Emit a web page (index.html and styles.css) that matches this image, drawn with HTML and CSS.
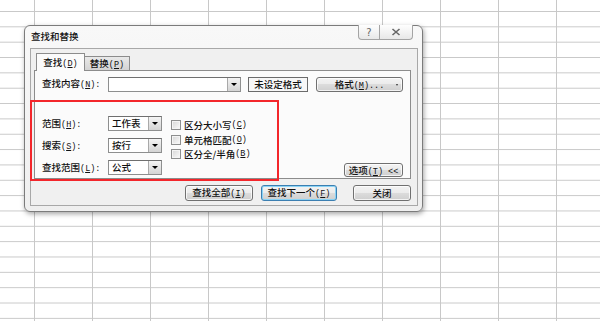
FILE: index.html
```html
<!DOCTYPE html>
<html lang="zh-CN">
<head>
    <meta charset="UTF-8">
    <meta name="viewport" content="width=device-width, initial-scale=1.0">
    <title>查找和替换</title>
    <link rel="stylesheet" href="styles.css">
</head>
<body>

    <div class="dialog">
        <div class="titlebar">
            <span class="title">查找和替换</span>
            <div class="caption-btns">
                <span class="cap-btn help">?</span>
                <span class="cap-btn close">
                    <svg width="10" height="8" viewBox="0 0 10 8">
                        <path d="M1.5 1 L8.5 7 M8.5 1 L1.5 7" stroke="#666" stroke-width="1.6" fill="none"/>
                    </svg>
                </span>
            </div>
        </div>

        <div class="client">
            <div class="tabs">
                <span class="tab active">查找<span class="key">(<u>D</u>)</span></span>
                <span class="tab">替换<span class="key">(<u>P</u>)</span></span>
            </div>

            <div class="tab-panel">
                <div class="find-row">
                    <label class="lbl">查找内容<span class="key">(<u>N</u>):</span></label>
                    <div class="combo find-combo"><span class="combo-text"></span><span class="drop"></span></div>
                    <span class="format-box">未设定格式</span>
                    <button class="btn format-btn">格式<span class="key">(<u>M</u>)...</span><span class="mini-arrow"></span></button>
                </div>

                <div class="options">
                    <div class="opt-list">
                        <div class="opt-row">
                            <label class="lbl">范围<span class="key">(<u>H</u>):</span></label>
                            <div class="combo small"><span class="combo-text">工作表</span><span class="drop"></span></div>
                        </div>
                        <div class="opt-row">
                            <label class="lbl">搜索<span class="key">(<u>S</u>):</span></label>
                            <div class="combo small"><span class="combo-text">按行</span><span class="drop"></span></div>
                        </div>
                        <div class="opt-row">
                            <label class="lbl">查找范围<span class="key">(<u>L</u>):</span></label>
                            <div class="combo small"><span class="combo-text">公式</span><span class="drop"></span></div>
                        </div>
                    </div>

                    <div class="checks">
                        <label class="check"><span class="box"></span>区分大小写<span class="key">(<u>C</u>)</span></label>
                        <label class="check"><span class="box"></span>单元格匹配<span class="key">(<u>O</u>)</span></label>
                        <label class="check"><span class="box"></span>区分全/半角<span class="key">(<u>B</u>)</span></label>
                    </div>

                    <button class="btn options-btn">选项<span class="key">(<u>T</u>) &lt;&lt;</span></button>
                </div>
            </div>

            <div class="footer">
                <button class="btn find-all">查找全部<span class="key">(<u>I</u>)</span></button>
                <button class="btn find-next default">查找下一个<span class="key">(<u>F</u>)</span></button>
                <button class="btn close-btn">关闭</button>
            </div>
        </div>

        <!-- red annotation frame -->
        <div class="highlight"></div>
    </div>

</body>
</html>
```

FILE: styles.css
```css
* {
    box-sizing: border-box;
}
body {
    margin: 0;
    width: 600px;
    height: 321px;
    overflow: hidden;
    position: relative;
    background-color: #fff;
    /* grade da planilha */
    background-image:
        linear-gradient(to right, #c8c8c8 1px, transparent 1px),
        linear-gradient(to bottom, #c8c8c8 1px, transparent 1px);
    background-size: 58px 100%, 100% 15.35px;
    background-position: 34px 0, 0 11px;
    font-family: "Noto Sans CJK SC", "Liberation Sans", sans-serif;
    font-size: 9.5px;
    font-weight: 500;
    color: #111;
}
.key {
    font-family: "Liberation Mono", monospace;
    font-size: 8.5px;
    font-weight: normal;
}

/* janela */
.dialog {
    position: absolute;
    left: 24px;
    top: 25px;
    width: 399px;
    height: 187px;
    border: 1px solid #7b7b7b;
    border-radius: 6px;
    background: linear-gradient(#f8f8f8, #efefef);
    box-shadow: 1px 2px 5px rgba(0, 0, 0, 0.35);
    display: flex;
    flex-direction: column;
}
.titlebar {
    height: 22px;
    display: flex;
    align-items: flex-start;
    padding-left: 6px;
}
.title {
    line-height: 20px;
}
.caption-btns {
    margin-left: auto;
    margin-right: 9px;
    display: flex;
}
.cap-btn {
    height: 15px;
    margin-top: -1px;
    border: 1px solid #a4a4a4;
    border-top: none;
    background: linear-gradient(#fefefe, #e8e8e8);
    display: flex;
    align-items: center;
    justify-content: center;
}
.help {
    width: 22px;
    border-radius: 0 0 0 4px;
    font-family: "DejaVu Sans", sans-serif;
    font-size: 10px;
    color: #666;
}
.close {
    width: 33px;
    border-left: none;
    border-radius: 0 0 4px 0;
}

.client {
    flex: 1;
    margin: 0 4px 5px 5px;
    border: 1px solid #a8a8a8;
    background: #f0f0f0;
    padding: 4px 6px 4px 3px;
    display: flex;
    flex-direction: column;
}

/* abas */
.tabs {
    height: 17px;
    display: flex;
    align-items: flex-end;
    padding-left: 2px;
    position: relative;
    z-index: 1;
}
.tab {
    height: 14px;
    width: 45px;
    border: 1px solid #8c8c8c;
    border-left: none;
    border-bottom: none;
    background: linear-gradient(#e9e9e9, #d3d3d3);
    text-align: center;
    line-height: 13px;
}
.tab.active {
    height: 18px;
    width: 49px;
    margin-bottom: -1px;
    border-left: 1px solid #8c8c8c;
    background: #fbfbfb;
    line-height: 17px;
}
.tab-panel {
    height: 109px;
    border: 1px solid #8c8c8c;
    background: #fbfbfb;
    padding: 6px 7px 7px 7px;
}

.lbl {
    width: 66px;
    line-height: 15px;
    white-space: nowrap;
}
.find-row {
    display: flex;
    align-items: center;
    height: 15px;
}
.combo {
    height: 15px;
    display: flex;
    border: 1px solid #8e8f8f;
    border-top-color: #6f6f6f;
    background: #fff;
}
.find-combo {
    width: 133px;
}
.combo.small {
    width: 54px;
}
.combo-text {
    flex: 1;
    padding-left: 3px;
    line-height: 13px;
    white-space: nowrap;
}
.drop {
    width: 13px;
    border-left: 1px solid #a9a9a9;
    background: linear-gradient(#f4f4f4, #d4d4d4);
    display: flex;
    align-items: center;
    justify-content: center;
}
.drop::after {
    content: "";
    border-left: 3px solid transparent;
    border-right: 3px solid transparent;
    border-top: 3px solid #000;
}
.format-box {
    width: 60px;
    height: 15px;
    margin-left: 7px;
    border: 1px solid #6b6b6b;
    background: #f7f7f7;
    text-align: center;
    line-height: 13px;
}

.btn {
    font: inherit;
    color: inherit;
    height: 16px;
    padding: 0;
    border: 1px solid #707070;
    border-radius: 3px;
    background: linear-gradient(#f3f3f3 0%, #ebebeb 50%, #dcdcdc 50%, #cfcfcf 100%);
    box-shadow: inset 0 0 0 1px rgba(255, 255, 255, 0.75);
    line-height: 13px;
    white-space: nowrap;
}
.btn.default {
    border-color: #3c7fb1;
    box-shadow: inset 0 0 0 1px #8ad3f5;
}
.format-btn {
    width: 87px;
    height: 15px;
    margin-left: 8px;
    position: relative;
}
.mini-arrow {
    position: absolute;
    right: 4px;
    top: 6px;
    border-left: 1.5px solid transparent;
    border-right: 1.5px solid transparent;
    border-top: 2px solid #333;
}

.options {
    margin-top: 24px;
    display: flex;
}
.opt-list {
    display: flex;
    flex-direction: column;
    gap: 5px;
}
.opt-row {
    display: flex;
}
.checks {
    margin-left: 9px;
    margin-top: 2px;
    display: flex;
    flex-direction: column;
}
.check {
    height: 14.5px;
    display: flex;
    align-items: center;
    white-space: nowrap;
}
.box {
    width: 10px;
    height: 10px;
    margin-right: 3px;
    border: 1px solid #8e8f8f;
    background: linear-gradient(135deg, #d6d6d6, #fbfbfb);
    box-shadow: inset 0 0 0 1px #f4f4f4;
}
.options-btn {
    margin-left: auto;
    align-self: flex-end;
    width: 59px;
    height: 14px;
    line-height: 12px;
}

.footer {
    margin-top: 6px;
    display: flex;
    justify-content: flex-end;
}
.find-all {
    width: 68px;
}
.find-next {
    width: 76px;
    margin-left: 8px;
}
.close-btn {
    width: 58px;
    margin-left: 16px;
}

/* moldura vermelha de destaque */
.highlight {
    position: absolute;
    left: 5px;
    top: 74px;
    width: 249px;
    height: 81px;
    border: 2px solid #f3262b;
}
```
